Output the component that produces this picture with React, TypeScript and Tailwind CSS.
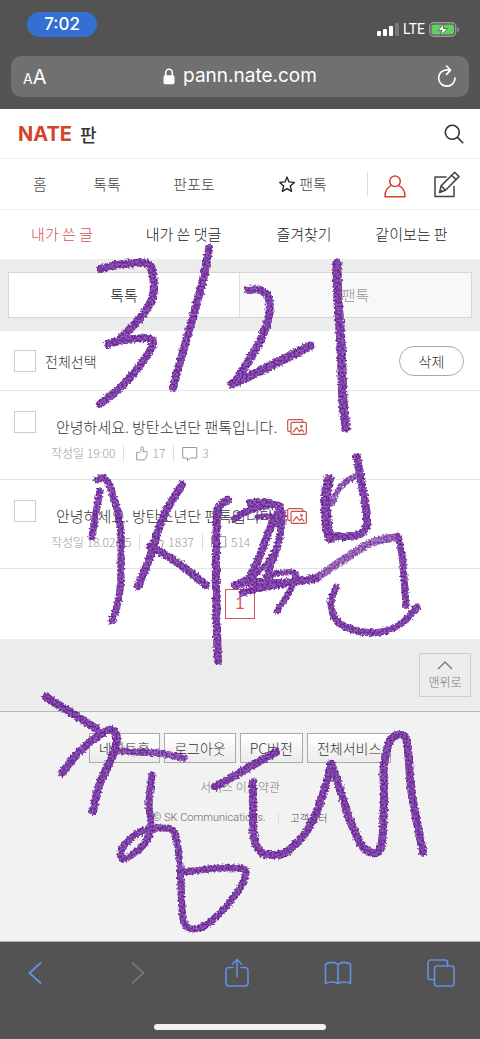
import React from 'react';

type Point = [number, number];

interface Stroke {
  width: number;
  opacity?: number;
  points: Point[];
}

interface Post {
  id: number;
  title: string;
  date: string;
  likes: number;
  comments: number;
}

const posts: Post[] = [
  { id: 1, title: '안녕하세요. 방탄소년단 팬톡입니다.', date: '19:00', likes: 17, comments: 3 },
  { id: 2, title: '안녕하세요. 방탄소년단 팬톡입니다.', date: '18.02.05', likes: 1837, comments: 514 },
];

const strokes: Stroke[] = [
  // first line
  { width: 8, points: [[101, 269], [117, 265], [135, 263], [146, 263], [152, 270], [153, 296], [141, 317], [121, 338]] },
  { width: 8, points: [[108, 344], [125, 340], [147, 338], [153, 343], [146, 357], [125, 383], [100, 404]] },
  { width: 8, points: [[209, 248], [203, 280], [192, 320], [182, 355], [173, 388]] },
  { width: 8, points: [[248, 290], [260, 290], [269, 299], [268, 320], [257, 347], [236, 380]] },
  { width: 9, points: [[232, 384], [250, 376], [280, 361], [310, 346]] },
  { width: 9, points: [[337, 263], [338, 300], [341, 345], [343, 400], [346, 428]] },
  // second line
  { width: 7, points: [[97, 480], [104, 478], [111, 489], [120, 524], [121, 567], [119, 598], [112, 621]] },
  { width: 7, points: [[100, 491], [96, 513], [92, 537]] },
  { width: 8, points: [[182, 485], [163, 517], [149, 560], [138, 586]] },
  { width: 8, points: [[150, 546], [178, 563], [206, 585]] },
  { width: 8, points: [[228, 500], [220, 506], [217, 519], [216, 593], [218, 661]] },
  { width: 7, points: [[234, 519], [250, 510], [275, 505], [282, 512], [279, 540], [267, 576]] },
  { width: 8, points: [[250, 503], [270, 503], [279, 511], [272, 524], [251, 575], [235, 585]] },
  { width: 5, points: [[257, 517], [276, 517], [279, 537], [269, 560], [249, 581]] },
  { width: 6, points: [[266, 577], [280, 573], [296, 574], [290, 591], [277, 611]] },
  { width: 8, points: [[236, 585], [256, 582], [280, 583], [315, 579]] },
  { width: 7, points: [[242, 593], [265, 587], [290, 583], [315, 578]] },
  { width: 8, opacity: 0.75, points: [[315, 579], [346, 558], [373, 542], [398, 537]] },
  { width: 7, points: [[398, 537], [402, 555], [406, 605]] },
  { width: 10, points: [[329, 479], [326, 495], [327, 525], [330, 538]] },
  { width: 8, points: [[357, 457], [361, 480], [367, 518], [363, 532], [347, 537], [330, 535]] },
  { width: 6, opacity: 0.8, points: [[355, 476], [340, 487], [332, 503]] },
  { width: 7, points: [[336, 587], [331, 603], [337, 621], [357, 631], [381, 632], [402, 623], [417, 607]] },
  // third line
  { width: 8, points: [[46, 697], [70, 712], [97, 729]] },
  { width: 8, points: [[62, 773], [80, 751], [101, 734], [112, 730], [117, 739], [112, 757], [100, 783], [93, 811]] },
  { width: 7, opacity: 0.85, points: [[114, 751], [157, 753], [184, 758]] },
  { width: 7, points: [[152, 775], [149, 803], [151, 828], [145, 843], [133, 854], [122, 859], [123, 847], [140, 832], [163, 828], [175, 834], [180, 867], [182, 908], [186, 926], [200, 928], [217, 916], [237, 893], [245, 877], [243, 869], [220, 868], [184, 872]] },
  { width: 8, points: [[276, 752], [246, 769], [215, 787]] },
  { width: 8, points: [[253, 782], [253, 810], [254, 838], [261, 852], [273, 855], [288, 851], [310, 826], [324, 791], [331, 764]] },
  { width: 8, points: [[331, 764], [338, 783], [350, 820], [362, 846], [376, 853], [382, 842], [384, 800], [384, 766], [390, 741], [400, 735], [407, 743], [412, 795], [423, 852]] },
];

// Catmull-Rom spline through the recorded points, as cubic segments
const toPath = (points: Point[]) => {
  let d = `M${points[0][0]} ${points[0][1]}`;
  for (let i = 0; i < points.length - 1; i++) {
    const p0 = points[i - 1] ?? points[i];
    const p1 = points[i];
    const p2 = points[i + 1];
    const p3 = points[i + 2] ?? p2;
    d += `C${p1[0] + (p2[0] - p0[0]) / 6} ${p1[1] + (p2[1] - p0[1]) / 6} ${p2[0] - (p3[0] - p1[0]) / 6} ${p2[1] - (p3[1] - p1[1]) / 6} ${p2[0]} ${p2[1]}`;
  }
  return d;
};

const Handwriting = () => (
  <svg viewBox="0 0 480 1039" className="absolute left-0 top-0 w-full pointer-events-none" fill="none" aria-hidden="true">
    <defs>
      <filter id="crayon" filterUnits="userSpaceOnUse" x="0" y="230" width="480" height="720" colorInterpolationFilters="sRGB">
        <feTurbulence type="fractalNoise" baseFrequency="0.5" numOctaves="3" seed="4" result="noise" />
        <feDisplacementMap in="SourceGraphic" in2="noise" scale="5" xChannelSelector="R" yChannelSelector="G" result="rough" />
        <feColorMatrix in="noise" type="matrix" values="0 0 0 0 0  0 0 0 0 0  0 0 0 0 0  0 0 5 0 -2" result="grain" />
        <feComposite in="rough" in2="grain" operator="in" result="textured" />
        <feComponentTransfer in="rough" result="base">
          <feFuncA type="linear" slope="0.75" />
        </feComponentTransfer>
        <feMerge>
          <feMergeNode in="base" />
          <feMergeNode in="textured" />
        </feMerge>
      </filter>
    </defs>
    <g stroke="#6c2699" strokeLinecap="round" strokeLinejoin="round" filter="url(#crayon)">
      {strokes.map((stroke, i) => (
        <path key={i} d={toPath(stroke.points)} strokeWidth={stroke.width} opacity={stroke.opacity ?? 1} />
      ))}
    </g>
  </svg>
);

const StatusBar = () => (
  <div className="flex items-start justify-between pl-[27px] pr-5 pt-3 h-14 text-white">
    <span className="w-[70px] h-[25px] rounded-full bg-[#3470d3] flex items-center justify-center text-[17px] font-medium">
      7:02
    </span>
    <div className="flex items-center gap-1 pt-2">
      <svg width="22" height="14" viewBox="0 0 22 14" fill="#fff">
        <rect x="0" y="9" width="4" height="5" rx="1" />
        <rect x="6" y="7" width="4" height="7" rx="1" />
        <rect x="12" y="4" width="4" height="10" rx="1" />
        <rect x="18" y="1" width="4" height="13" rx="1" fill="#787878" />
      </svg>
      <span className="text-sm leading-[18px] font-[Roboto]">LTE</span>
      <svg width="31" height="15" viewBox="0 0 31 15" fill="none">
        <rect x="0.7" y="0.7" width="26" height="13.6" rx="4" stroke="#9a9a9a" strokeWidth="1.4" />
        <rect x="2.4" y="2.4" width="22.6" height="10.2" rx="2.4" fill="#64ce64" />
        <path d="M28.500 5v5c2-.8 2-4.200 0-5z" fill="#9a9a9a" />
        <path d="M15 1.500 9 8.500h4l-1.500 5.500L18.500 6.500h-4.300z" fill="#fff" stroke="#535353" strokeWidth="0.8" />
      </svg>
    </div>
  </div>
);

const AddressBar = () => (
  <div className="mx-[11px] h-[41px] rounded-[10px] bg-[#707070] flex items-center justify-between px-3 text-white">
    <button className="w-12 text-left leading-none" aria-label="텍스트 크기">
      <span className="text-sm">A</span>
      <span className="text-xl">A</span>
    </button>
    <div className="flex items-center gap-2">
      <svg width="12" height="17" viewBox="0 0 12 17" fill="none">
        <path d="M2.700 8V4.800a3.300 3.600 0 0 1 6.600 0V8" stroke="#fff" strokeWidth="1.600" />
        <rect x="0.500" y="7.200" width="11" height="9" rx="1.600" fill="#fff" />
      </svg>
      <span className="text-[19px]">pann.nate.com</span>
    </div>
    <button className="w-12 flex justify-end" aria-label="새로고침">
      <svg width="20" height="23" viewBox="0 0 20 23" fill="none" stroke="#fff" strokeWidth="1.700" strokeLinecap="round" strokeLinejoin="round">
        <path d="M18 13a8.200 8.200 0 1 1-8.200-8.200c1.300 0 2.300.1 3.200.4" />
        <path d="M9.500 1l4 4.200-4 4.100" />
      </svg>
    </button>
  </div>
);

const SiteHeader = () => (
  <header className="h-[50px] px-[18px] pr-4 flex items-center justify-between border-b border-[#eeeeee]">
    <a href="#" className="flex items-center gap-2">
      <span className="font-[Inter] font-bold text-xl text-[#d5432c]">NATE</span>
      <span className="text-lg leading-6 font-medium text-[#333]">판</span>
    </a>
    <button aria-label="검색">
      <svg width="20" height="20" viewBox="0 0 20 20" fill="none" stroke="#333" strokeWidth="1.600" strokeLinecap="round">
        <circle cx="8.300" cy="8.300" r="7" />
        <path d="M13.400 13.400 18.800 18.800" />
      </svg>
    </button>
  </header>
);

const MainNav = () => (
  <nav className="h-[51px] grid grid-cols-[80fr_54fr_120fr_98fr_16fr_54fr_50fr_8fr] items-center justify-items-center border-b border-[#eeeeee] text-[15px] text-[#444]">
    <a href="#">홈</a>
    <a href="#">톡톡</a>
    <a href="#">판포토</a>
    <a href="#" className="flex items-center gap-1">
      <svg width="16" height="17" viewBox="0 0 16 17" fill="none" stroke="#222" strokeWidth="1.300" strokeLinejoin="round">
        <path d="M8 1 10 5.900l5.300.5-4 3.600 1.300 5.400L8 12.600l-4.600 2.800L4.700 10l-4-3.600L6 5.900z" />
      </svg>
      <span>팬톡</span>
    </a>
    <span className="justify-self-end w-px h-6 bg-[#ddd]" />
    <a href="#" aria-label="내 정보" className="pt-1">
      <svg width="22" height="23" viewBox="0 0 22 23" fill="none" stroke="#d0432f" strokeWidth="1.500" strokeLinejoin="round">
        <circle cx="11" cy="6.300" r="5.300" />
        <path d="M7.300 10.400C3.300 12.200 1 15.600 1 21.700h20c0-6.100-2.300-9.500-6.300-11.300" />
      </svg>
    </a>
    <a href="#" aria-label="글쓰기">
      <svg width="26" height="27" viewBox="0 0 26 27" fill="none" stroke="#444" strokeWidth="1.500" strokeLinejoin="round">
        <path d="M12.500 6H1v19.500h19V15" />
        <path d="m5.500 21.500 1.600-6.600L20.700 1.300l4.300 4.300L11.500 19.200z" />
        <path d="m7.100 14.900 4.300 4.300M17.700 4.300 22 8.600M5.500 21.500l2.500-2.600" />
      </svg>
    </a>
  </nav>
);

const SubNav = () => (
  <nav className="h-[49px] grid grid-cols-[124fr_119fr_122fr_93fr_22fr] items-center justify-items-center text-[15px] text-[#222]">
    <a href="#" className="text-[#cf5650]">내가 쓴 글</a>
    <a href="#">내가 쓴 댓글</a>
    <a href="#">즐겨찾기</a>
    <a href="#">같이보는 판</a>
  </nav>
);

const TabSwitch = () => (
  <div className="bg-[#ececec] px-2 py-[13px]">
    <div className="h-[46px] grid grid-cols-2 border border-[#d6d6d6] text-[15px]">
      <button className="bg-white text-[#222] border-r border-[#dedede]">톡톡</button>
      <button className="bg-[#f8f8f8] text-[#999]">팬톡</button>
    </div>
  </div>
);

const checkbox = 'appearance-none shrink-0 w-[22px] h-[22px] border border-[#ccc] bg-white checked:bg-[#d0432f]';

const PostRow = ({ post }: { post: Post }) => (
  <li className="h-[89px] pl-[14px] pt-5 flex items-start border-b border-[#e4e4e4]">
    <input type="checkbox" aria-label={`${post.title} ${post.date}`} className={checkbox} />
    <div className="pl-[15px] pt-1">
      <a href="#" className="pl-[5px] flex items-center gap-[10px] text-[15px] leading-6 text-[#333]">
        {post.title}
        <svg width="20" height="16" viewBox="0 0 20 16" fill="none" stroke="#c8524c" strokeWidth="1.200" strokeLinejoin="round">
          <path d="M3.500 12.300H2a1.300 1.300 0 0 1-1.300-1.300V2A1.300 1.300 0 0 1 2 .7h12.500A1.300 1.300 0 0 1 15.800 2v1" />
          <rect x="4" y="3.300" width="15.300" height="12" rx="1.300" />
          <path d="m6 13.300 3.600-4.600 3 4 2-2.200 2.500 2.800" />
          <circle cx="14.500" cy="7.500" r="0.800" />
        </svg>
      </a>
      <div className="flex items-center pt-1 text-xs leading-5 text-[#999]">
        <span>작성일 {post.date}</span>
        <span className="w-px h-4 mx-2 bg-[#ddd]" />
        <span className="flex items-center gap-1 pl-1">
          <svg width="12" height="15" viewBox="0 0 12 15" fill="none" stroke="#999" strokeWidth="1" strokeLinejoin="round">
            <path d="M.7 6.500h2.500C5 5 5.200 3.500 5.200 1.500c0-1.200 2.300-1.200 2.300.8 0 1.200-.4 2.400-.7 3.300h3.400c1 0 1.400.9 1 1.800l-1.500 5.300c-.2.800-.8 1.200-1.500 1.200H.7z" />
          </svg>
          {post.likes}
        </span>
        <span className="w-px h-4 mx-2 bg-[#ddd]" />
        <span className="flex items-center gap-1">
          <svg width="16" height="16" viewBox="0 0 16 16" fill="none" stroke="#999" strokeWidth="1" strokeLinejoin="round">
            <path d="M.7 2.500h14v10.500H8.500L5.500 15.500v-2.500H.7z" />
          </svg>
          {post.comments}
        </span>
      </div>
    </div>
  </li>
);

const footerButton = 'h-[30px] px-[9px] border border-[#aaa] bg-linear-to-b from-white to-[#ebebeb] text-sm text-[#333]';

const SiteFooter = () => (
  <footer className="flex-1 bg-[#f2f2f2] border-t border-[#b5b5b5] border-b pt-[21px] flex flex-col items-center">
    <div className="flex gap-1">
      <button className={footerButton}>네이트홈</button>
      <button className={footerButton}>로그아웃</button>
      <button className={footerButton}>PC버전</button>
      <button className={footerButton}>전체서비스</button>
    </div>
    <a href="#" className="pt-[15px] text-xs leading-[18px] text-[#777]">서비스 이용약관</a>
    <div className="pt-3 flex items-center text-[#666]">
      <span className="font-[Roboto] text-[11px] leading-5">© SK Communications.</span>
      <span className="w-px h-3 mx-3 bg-[#ddd]" />
      <a href="#" className="text-[10px] leading-5 text-[#444]">고객센터</a>
    </div>
  </footer>
);

const BrowserToolbar = () => (
  <div className="h-[97px] bg-[#535353] flex flex-col justify-between items-center pt-4 pb-[9px]">
    <div className="w-full flex items-center justify-between pl-7 pr-[25px] text-[#648fe0]">
      <button aria-label="뒤로">
        <svg width="14" height="24" viewBox="0 0 14 24" fill="none" stroke="currentColor" strokeWidth="1.800" strokeLinecap="round" strokeLinejoin="round">
          <path d="M12.500 2 1.500 12l11 10" />
        </svg>
      </button>
      <button aria-label="앞으로" disabled className="pl-[14px] text-[#747474]">
        <svg width="14" height="24" viewBox="0 0 14 24" fill="none" stroke="currentColor" strokeWidth="1.800" strokeLinecap="round" strokeLinejoin="round">
          <path d="m1.500 2 11 10-11 10" />
        </svg>
      </button>
      <button aria-label="공유" className="pl-1">
        <svg width="24" height="30" viewBox="0 0 24 30" fill="none" stroke="currentColor" strokeWidth="1.600" strokeLinecap="round" strokeLinejoin="round">
          <path d="M8 9.500H4A3 3 0 0 0 1 12.500V25a3 3 0 0 0 3 3h16a3 3 0 0 0 3-3V12.500a3 3 0 0 0-3-3h-4M12 18.500V1.500M7.500 6 12 1.500 16.500 6" />
        </svg>
      </button>
      <button aria-label="책갈피">
        <svg width="28" height="24" viewBox="0 0 28 24" fill="none" stroke="currentColor" strokeWidth="1.600" strokeLinejoin="round">
          <path d="M14 3.500C11 .7 5 .7 1.500 3.200v19.300c3.500-2 9.500-2 12.500.2 3-2.200 9-2.200 12.500-.2V3.200C23 .7 17 .7 14 3.500zM14 3.500v19.200" />
        </svg>
      </button>
      <button aria-label="탭">
        <svg width="28" height="28" viewBox="0 0 28 28" fill="none" stroke="currentColor" strokeWidth="1.600" strokeLinejoin="round">
          <path d="M7.500 20.500H3.500a2.500 2.500 0 0 1-2.500-2.500V3.500A2.500 2.500 0 0 1 3.500 1H18a2.500 2.500 0 0 1 2.500 2.500v3.500" />
          <rect x="7.500" y="7" width="19.500" height="20" rx="2.500" />
        </svg>
      </button>
    </div>
    <div className="w-[172px] h-[6px] rounded-full bg-[#f0f0f0]" />
  </div>
);

const App: React.FC = () => {
  return (
    <div className="relative min-h-screen flex flex-col bg-white font-light font-['Noto_Sans_CJK_KR',sans-serif]">
      {/* Browser chrome */}
      <div className="h-[109px] bg-[#535353] font-[Inter] font-normal">
        <StatusBar />
        <AddressBar />
      </div>

      {/* Site */}
      <SiteHeader />
      <MainNav />
      <SubNav />
      <TabSwitch />

      <main>
        <div className="h-[60px] pl-[14px] pr-4 flex items-center justify-between border-b border-[#e4e4e4]">
          <label className="flex items-center gap-[9px] text-sm text-[#333]">
            <input type="checkbox" className={checkbox} />
            전체선택
          </label>
          <button className="w-[65px] h-[30px] rounded-full border border-[#aaa] text-sm text-[#333]">삭제</button>
        </div>
        <ul>
          {posts.map((post) => (
            <PostRow key={post.id} post={post} />
          ))}
        </ul>
        <div className="h-[70px] flex items-center justify-center">
          <button className="w-[30px] h-[30px] border border-[#d9534d] font-['Liberation_Sans'] text-base text-[#d9534d]">1</button>
        </div>
      </main>

      <div className="h-[72px] bg-[#ececec] pr-[9px] flex items-center justify-end">
        <a href="#" className="w-[52px] h-11 border border-[#ccc] flex flex-col items-center justify-center gap-1 text-xs text-[#777]">
          <svg width="16" height="9" viewBox="0 0 16 9" fill="none" stroke="#777" strokeWidth="1.400">
            <path d="m1 8 7-7 7 7" />
          </svg>
          맨위로
        </a>
      </div>

      <SiteFooter />
      <BrowserToolbar />
      <Handwriting />
    </div>
  );
};

export default App;
